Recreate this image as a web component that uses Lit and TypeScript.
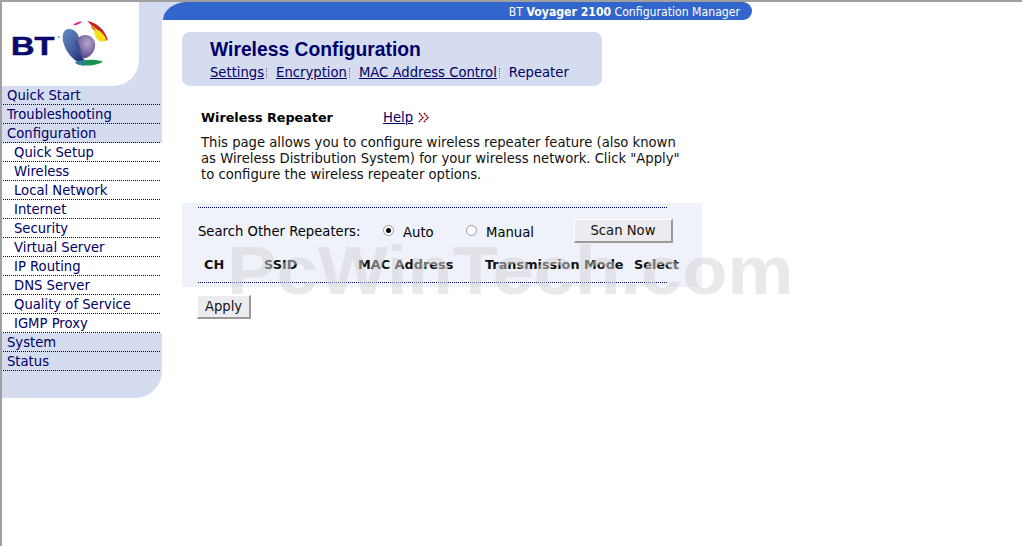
import { LitElement, html, css, svg } from "lit";
import { customElement } from "lit/decorators.js";

const MENU: [string, boolean][] = [
  ["Quick Start", false], ["Troubleshooting", false], ["Configuration", false],
  ["Quick Setup", true], ["Wireless", true], ["Local Network", true], ["Internet", true],
  ["Security", true], ["Virtual Server", true], ["IP Routing", true], ["DNS Server", true],
  ["Quality of Service", true], ["IGMP Proxy", true], ["System", false], ["Status", false],
];

const globe = svg`<svg class="globe" width="54" height="54" viewBox="0 0 54 54">
  <defs>
    <linearGradient id="blue" x1="0" y1="0" x2="0.8" y2="1"><stop offset="0" stop-color="#5f8cc4"/><stop offset="0.55" stop-color="#46609f"/><stop offset="1" stop-color="#1f2a6b"/></linearGradient>
    <radialGradient id="purple" cx="0.6" cy="0.35" r="0.8"><stop offset="0" stop-color="#b7a6cc"/><stop offset="0.6" stop-color="#7460a0"/><stop offset="1" stop-color="#3c2f78"/></radialGradient>
  </defs>
  <path d="M11 13 C5 13 3.500 20 5.500 27 C8 36 15 45 25 48.500 C28 48 27 45 25 42 C19 34 21 28 21 22 C20 16 15 13 11 13Z" fill="url(#blue)"/>
  <path d="M27 19 C34 19 38 25 37 31 C36 37 31 42 26 42.500 C20 38 17 32 17.500 26 C19 22 23 19 27 19Z" fill="url(#purple)"/>
  <path d="M18.500 23.500 C22 29 23 36 25 42 C20 37 17.500 31 17 26Z" fill="#3e4f90"/>
  <path d="M17 46.500 C26 43 37 43 45 45.500 C40 49 31 50 25 49.500 C21 49 18.500 48 17 46.500Z" fill="#17924f"/>
  <path d="M17 46.500 C20 45 24 44 27.500 43.700 C28 46 27 48.500 25 49.500 C21 49 18.500 48 17 46.500Z" fill="#2c7f96"/>
  <path d="M29.500 5 C38 6 47 14 49.500 23 C49 25 47 25 46 23 C44 18 37 11 33 9 Z" fill="#c8261f"/>
  <path d="M37 13.500 C41 13 46 18 48 23 C47.500 26 43 27 40 24 C37 21 35 16 37 13.500Z" fill="#f6e01a"/>
  <path d="M33 9 C36 10 38.500 12 37.500 15 C35 14.500 33 12.500 33 9Z" fill="#e58a25"/>
  <path d="M15 9 C17.500 6.500 21 5 24 5.500 C22.500 8 18 9.700 15 9Z" fill="#de2f88"/>
  <circle cx="0.800" cy="21" r="0.800" fill="#1a2a80"/>
</svg>`;

@customElement("app-root")
export class AppRoot extends LitElement {
  static styles = css`
    :host {
      display: block;
      position: relative;
      width: 1022px;
      height: 546px;
      box-sizing: border-box;
      overflow: hidden;
      border-top: 2px solid #a0a0a0;
      border-left: 2px solid #a0a0a0;
      background: #fff;
      font-family: "DejaVu Sans", sans-serif;
      font-size: 13.2px;
      color: #000;
    }
    .page { display: flex; align-items: flex-start; }
    .side { width: 160px; flex: none; background: #d6dcf0; border-radius: 0 0 27px 0; padding-bottom: 27px; }
    .logo-wrap { background: #d6dcf0; }
    .logo {
      width: 137px; height: 84px; background: #fff; border-radius: 0 0 26px 0;
      box-sizing: border-box; padding: 14px 0 0 9px; display: flex; align-items: flex-start;
    }
    .bt {
      font-family: "Liberation Sans", sans-serif; font-weight: 700; font-size: 25px; line-height: 25px;
      color: #0a0a6e; -webkit-text-stroke: 0.6px #0a0a6e; margin-top: 18px; width: 47px;
      transform: scaleX(1.3); transform-origin: left top;
    }
    .item {
      height: 19px; box-sizing: border-box; border-bottom: 1px dotted #000066;
      line-height: 18px; padding: 1px 0 0 4px; color: #000066; margin: 0 2px 0 1px;
    }
    .row { background: #d6dcf0; }
    .row.sub { background: #fff; }
    .row.sub .item { padding-left: 11px; }
    .main { flex: 1; min-width: 0; }
    .bar-bg {
      background: linear-gradient(#d6dcf0, #d6dcf0) left top / 30px 18px no-repeat;
      width: 590px; padding-left: 1px; box-sizing: border-box;
    }
    .bar {
      height: 18px; background: #3366cc; border-radius: 25px 9px 9px 0 / 18px 9px 9px 0;
      color: #fff; font-family: "DejaVu Sans Condensed", "DejaVu Sans", sans-serif; font-stretch: condensed;
      font-size: 12.15px; line-height: 20px; box-sizing: border-box;
      display: flex; justify-content: flex-end; padding-right: 12px; white-space: pre;
    }
    .content { padding: 12px 0 0 20px; }
    .head {
      width: 420px; height: 54px; background: #d6dcf0; border-radius: 8px; box-sizing: border-box;
      padding: 6px 0 0 28px; color: #000066;
    }
    .head h1 {
      margin: 0; font-family: "Liberation Sans", sans-serif; font-weight: 700; font-size: 19.3px; line-height: 24px;
    }
    .tabs { display: flex; line-height: 18px; margin-top: 2px; color: #000066; }
    .tabs a { color: #000066; text-decoration: underline; }
    .sep { border-right: 1px dotted #777; height: 10px; margin: 4px 9px 0 2px; }
    .intro { padding: 23px 0 0 19px; width: 500px; box-sizing: border-box; }
    .intro-head { display: flex; line-height: 18px; }
    .intro-head b { width: 182px; font-size: 12.75px; }
    .intro-head a { color: #000066; text-decoration: underline; }
    .chev { margin: 3px 0 0 5px; }
    .intro p { margin: 8px 0 0; line-height: 16px; width: 484px; color: #111; }
    .panel { margin-top: 20px; width: 520px; height: 84px; background: #eff2fb; box-sizing: border-box; padding: 4px 0 0 16px; }
    .dots { width: 469px; border-top: 1px dotted #000066; }
    .search { display: flex; align-items: center; height: 24px; margin-top: 11px; }
    .search .lbl { width: 185px; white-space: nowrap; }
    .radio {
      width: 11px; height: 11px; border-radius: 50%; background: #fff; border: 1px solid #9a9a9a; box-sizing: border-box;
      display: flex; align-items: center; justify-content: center; margin-top: -1px;
    }
    .radio i { width: 5px; height: 5px; border-radius: 50%; background: #000; display: block; }
    .opt { margin-left: 9px; margin-top: 2px; }
    .opt.a { width: 63px; }
    .opt.m { width: 42px; }
    .btn {
      box-sizing: border-box; background: #ecebef; border: 1px solid #fff; border-right: 2px solid #9a9a9a; border-bottom: 2px solid #9a9a9a;
      display: flex; align-items: center; justify-content: center; color: #111;
    }
    .scan { width: 99px; height: 24px; margin-left: 46px; }
    .cols {
      display: grid; grid-template-columns: 60px 94px 127px 149px auto; margin: 13px 0 0 6px;
      font-weight: 700; font-size: 12.85px; line-height: 18px; width: 500px; white-space: nowrap; color: #111;
    }
    .dots.low { margin-top: 8px; }
    .apply { width: 54px; height: 24px; margin: 8px 0 0 15px; }
    .mark {
      position: absolute; left: 225px; top: 226px; font-family: "Liberation Sans", sans-serif; font-weight: 700;
      font-size: 68px; line-height: 84px; color: #d4d4d4; opacity: 0.5; pointer-events: none; white-space: nowrap;
      transform: scaleX(1.09); transform-origin: left top;
    }
  `;

  render() {
    return html`
      <div class="page">
        <div class="side">
          <div class="logo-wrap"><div class="logo"><span class="bt">BT</span>${globe}</div></div>
          ${MENU.map(([t, sub]) => html`<div class="row ${sub ? "sub" : ""}"><div class="item">${t}</div></div>`)}
        </div>
        <div class="main">
          <div class="bar-bg"><div class="bar"><span>BT <b>Voyager 2100</b> Configuration Manager</span></div></div>
          <div class="content">
            <div class="head">
              <h1>Wireless Configuration</h1>
              <div class="tabs">
                <a>Settings</a><span class="sep"></span>
                <a>Encryption</a><span class="sep"></span>
                <a>MAC Address Control</a><span class="sep"></span>
                <span>Repeater</span>
              </div>
            </div>
            <div class="intro">
              <div class="intro-head"><b>Wireless Repeater</b><a>Help</a>
                <svg class="chev" width="12" height="11" viewBox="0 0 12 11"><path d="M1 1 L5 5.500 L1 10 M6 1 L10 5.500 L6 10" fill="none" stroke="#8c1010" stroke-width="1.500" stroke-dasharray="2 0.600"/></svg>
              </div>
              <p>This page allows you to configure wireless repeater feature (also known as Wireless Distribution System) for your wireless network. Click "Apply" to configure the wireless repeater options.</p>
            </div>
            <div class="panel">
              <div class="dots"></div>
              <div class="search">
                <span class="lbl">Search Other Repeaters:</span>
                <span class="radio"><i></i></span><span class="opt a">Auto</span>
                <span class="radio"></span><span class="opt m">Manual</span>
                <span class="btn scan">Scan Now</span>
              </div>
              <div class="cols"><span>CH</span><span>SSID</span><span>MAC Address</span><span>Transmission Mode</span><span>Select</span></div>
              <div class="dots low"></div>
            </div>
            <div class="btn apply">Apply</div>
          </div>
        </div>
      </div>
      <div class="mark">PcWinTech.com</div>
    `;
  }
}
